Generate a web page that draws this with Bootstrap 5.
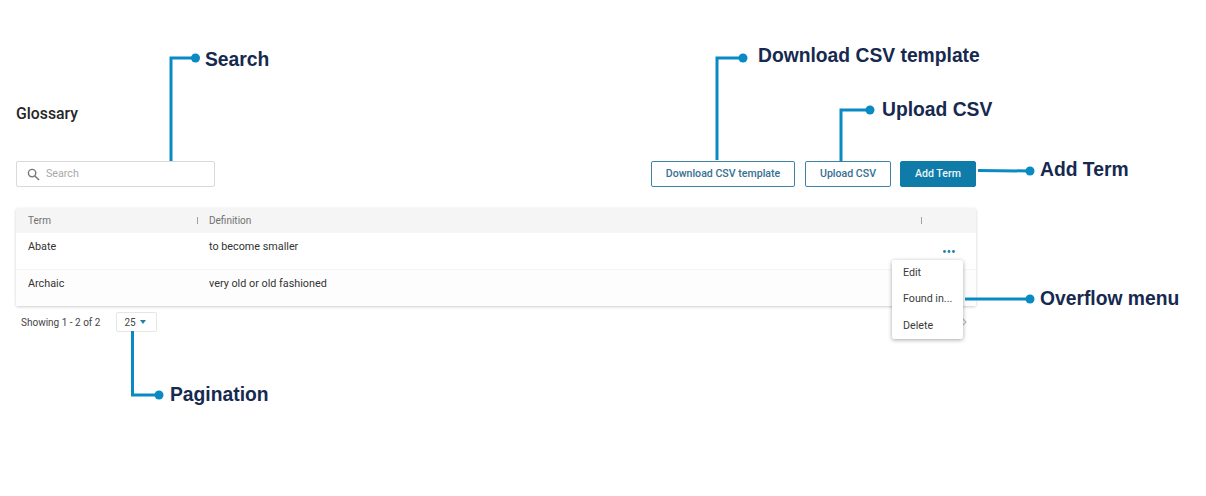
<!DOCTYPE html>
<html lang="en">
<head>
<meta charset="utf-8">
<title>Glossary</title>
<link rel="stylesheet" href="https://cdn.jsdelivr.net/npm/bootstrap@5.3.0/dist/css/bootstrap.min.css">
<style>
html,body{height:496px;overflow:hidden;background:#fff;}
body{font-family:Roboto,"Liberation Sans",sans-serif;color:#2b2b2b;}
.stage{position:relative;width:1206px;height:496px;padding:104px 230px 0 16px;}
.page-title{font-size:15.800px;font-weight:500;line-height:19px;margin:0 0 38px;color:#262626;}
.search-box{width:199px;height:26px;border:1px solid #d9d9d9;border-radius:2px;padding:1px 0 0 10px;gap:6px;font-size:10.700px;color:#a8a8a8;}
.act-btn{height:26px;font-size:10.600px;font-weight:500;line-height:1;padding:0;white-space:nowrap;border-radius:2px;border:1px solid #3f83a3;color:#35708f;background:#fff;display:flex;align-items:center;justify-content:center;}
.act-btn.w-dl{width:144px;}
.act-btn.w-up{width:86px;margin-right:-1px;}
.act-btn.solid{width:76px;background:#0f7ba8;border-color:#0f7ba8;color:#eaf6fb;}
.actions{gap:10px;}
.grid-card{margin-top:21px;border-radius:2px;box-shadow:0 1px 3px rgba(0,0,0,.2);background:#fff;}
.grid-head{height:25px;background:#f5f5f5;font-size:10px;color:#707070;}
.grid-row{font-size:10.800px;color:#333;padding-top:6px;}
.grid-row.r1{height:37px;border-bottom:1px solid #f4f4f4;}
.grid-row.r2{height:36px;background:#fdfdfd;}
.c-term{width:181px;padding-left:12px;}
.c-sep{width:12px;position:relative;}
.c-sep::before{content:"";display:block;width:1px;height:7px;background:#a0a0a0;}
.c-def{flex:1 1 auto;}
.c-end{width:55px;}
.grid-foot{font-size:10px;color:#444;padding:6px 0 0 5px;}
.pager-size{width:41px;height:20px;margin-left:16px;border:1px solid #e6e6e6;border-radius:2px;padding-left:7px;gap:4px;font-size:10px;color:#444;}
.caret-d{width:0;height:0;border-left:3.500px solid transparent;border-right:3.500px solid transparent;border-top:4px solid #2a7f9e;}
.dots{position:absolute;left:943px;top:250px;width:12px;height:3px;}
.more-menu{position:absolute;left:892px;top:260px;width:71px;height:79px;background:#fff;border-radius:2px;box-shadow:0 1px 4px rgba(0,0,0,.35);font-size:10.700px;color:#3a3a3a;padding:0 0 0 11px;display:flex;flex-direction:column;justify-content:space-around;}
.chev{position:absolute;left:961px;top:317px;}
.anno{position:absolute;left:0;top:0;pointer-events:none;}
.tag{position:absolute;font-family:"Liberation Sans",Arial,sans-serif;font-weight:700;font-size:19.300px;line-height:24px;color:#16294f;white-space:nowrap;}
.t-search{left:205px;top:48px;}
.t-dl{left:758px;top:44px;}
.t-up{left:882px;top:98px;}
.t-add{left:1040px;top:158px;}
.t-over{left:1040px;top:287px;}
.t-page{left:170px;top:383px;}
</style>
</head>
<body>
<div class="stage">
  <h1 class="page-title">Glossary</h1>
  <div class="d-flex justify-content-between align-items-center">
    <div class="search-box d-flex align-items-center">
      <svg width="13" height="13" viewBox="0 0 14 14" fill="none" stroke="#777" stroke-width="1.500"><circle cx="5.500" cy="5.500" r="4"/><path d="M8.500 8.500 13 13"/></svg>
      <span>Search</span>
    </div>
    <div class="actions d-flex">
      <button type="button" class="act-btn w-dl">Download CSV template</button>
      <button type="button" class="act-btn w-up">Upload CSV</button>
      <button type="button" class="act-btn solid">Add Term</button>
    </div>
  </div>
  <div class="grid-card">
    <div class="grid-head d-flex align-items-center">
      <div class="c-term">Term</div><div class="c-sep"></div><div class="c-def">Definition</div><div class="c-sep c-end"></div>
    </div>
    <div class="grid-row r1 d-flex">
      <div class="c-term">Abate</div><div class="c-sep invisible"></div><div class="c-def">to become smaller</div>
    </div>
    <div class="grid-row r2 d-flex">
      <div class="c-term">Archaic</div><div class="c-sep invisible"></div><div class="c-def">very old or old fashioned</div>
    </div>
  </div>
  <div class="grid-foot d-flex align-items-center">
    <span>Showing 1 - 2 of 2</span>
    <div class="pager-size d-flex align-items-center"><span>25</span><i class="caret-d"></i></div>
  </div>

  <svg class="dots" viewBox="0 0 12 3"><g fill="#1f7fa6"><circle cx="1.500" cy="1.500" r="1.400"/><circle cx="6" cy="1.500" r="1.400"/><circle cx="10.500" cy="1.500" r="1.400"/></g></svg>
  <svg class="chev" width="6" height="10" viewBox="0 0 6 10" fill="none" stroke="#bdbdbd" stroke-width="1.200"><path d="M1 1l4 4-4 4"/></svg>
  <div class="more-menu"><span>Edit</span><span>Found in...</span><span>Delete</span></div>

  <svg class="anno" width="1206" height="496" viewBox="0 0 1206 496" fill="none" stroke="#0a8ac4" stroke-width="3">
    <path d="M171 161V58H196"/>
    <path d="M717 160V58H743"/>
    <path d="M841 161V110H870"/>
    <path d="M978 170.500L1030 171"/>
    <path d="M965 299H1030"/>
    <path d="M132.500 331V395H159"/>
    <g fill="#0a8ac4" stroke="none">
      <circle cx="195.500" cy="58" r="4.500"/>
      <circle cx="743" cy="58" r="4.500"/>
      <circle cx="870" cy="110" r="4.500"/>
      <circle cx="1030" cy="171" r="4.500"/>
      <circle cx="1030" cy="299" r="4.500"/>
      <circle cx="159" cy="395" r="4.500"/>
    </g>
  </svg>
  <span class="tag t-search">Search</span>
  <span class="tag t-dl">Download CSV template</span>
  <span class="tag t-up">Upload CSV</span>
  <span class="tag t-add">Add Term</span>
  <span class="tag t-over">Overflow menu</span>
  <span class="tag t-page">Pagination</span>
</div>
</body>
</html>
